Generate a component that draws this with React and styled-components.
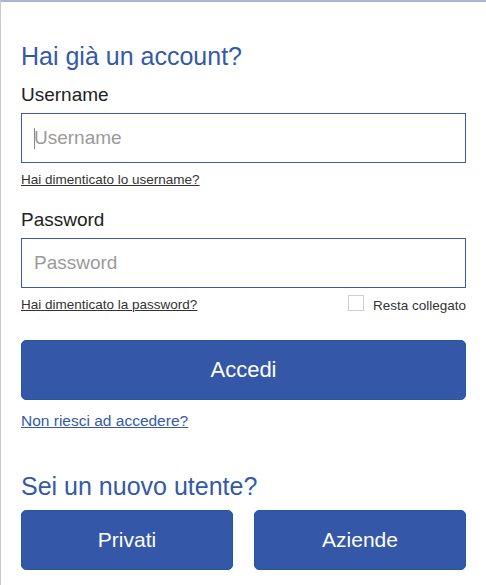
import React from 'react';
import styled, { createGlobalStyle } from 'styled-components';

const GlobalStyle = createGlobalStyle`
  html, body {
    margin: 0;
    padding: 0;
    background: #ffffff;
  }
  body {
    font-family: "Liberation Sans", Arial, Helvetica, sans-serif;
  }
  * {
    box-sizing: border-box;
  }
`;

const Page = styled.div`
  width: 486px;
  height: 585px;
  overflow: hidden;
  border-top: 2px solid #aab5d4;
  border-left: 1px solid #cbcbcb;
  padding: 39px 20px 0 20px;
  display: flex;
  flex-direction: column;
`;

const Heading = styled.h2`
  margin: ${({ $top }) => $top || 0}px 0 0 0;
  font-size: 25px;
  line-height: 30px;
  font-weight: 400;
  color: #3559a9;
`;

const Label = styled.label`
  display: block;
  margin-top: ${({ $top }) => $top}px;
  font-size: 19px;
  line-height: 22px;
  color: #222;
`;

const Field = styled.div`
  position: relative;
  margin-top: 7px;
`;

const Input = styled.input`
  display: block;
  width: 100%;
  height: 50px;
  border: 1px solid #3a5ca6;
  border-radius: 0;
  padding: 0 12px;
  font-family: inherit;
  font-size: 19px;
  color: #222;
  outline: none;
  &::placeholder {
    color: #9a9a9a;
  }
`;

const Caret = styled.span`
  position: absolute;
  left: 13px;
  top: 15px;
  width: 1px;
  height: 21px;
  background: #888;
`;

const SmallLink = styled.a`
  font-size: 13.5px;
  line-height: 16px;
  color: #333;
  text-decoration: underline;
`;

const HelpRow = styled.div`
  margin-top: 9px;
  display: flex;
  justify-content: space-between;
  align-items: center;
  height: 16px;
`;

const Remember = styled.label`
  display: flex;
  align-items: center;
  gap: 9px;
  font-size: 13.5px;
  color: #333;
`;

const Check = styled.input`
  appearance: none;
  margin: 0;
  width: 16px;
  height: 16px;
  border: 1px solid #cfcfcf;
  background: #fff;
  position: relative;
  top: -2px;
`;

const Button = styled.button`
  display: flex;
  align-items: center;
  justify-content: center;
  width: 100%;
  height: 60px;
  border: 1px solid #1f59a0;
  border-radius: 5px;
  background: #3457a8;
  color: #fff;
  font-family: inherit;
  font-size: ${({ $size }) => $size}px;
  padding: 0;
  cursor: pointer;
`;

const MainAction = styled.div`
  margin-top: 27px;
`;

const BlueLink = styled.a`
  display: block;
  margin-top: 12px;
  font-size: 15.5px;
  line-height: 18px;
  color: #3559a9;
  text-decoration: underline;
`;

const ButtonRow = styled.div`
  margin-top: 9px;
  display: grid;
  grid-template-columns: 1fr 1fr;
  gap: 21px;
`;

export default function App() {
  return (
    <>
      <GlobalStyle />
      <Page>
        <Heading>Hai già un account?</Heading>

        <Label $top={13}>Username</Label>
        <Field>
          <Input placeholder="Username" />
          <Caret />
        </Field>
        <HelpRow>
          <SmallLink href="#">Hai dimenticato lo username?</SmallLink>
        </HelpRow>

        <Label $top={21}>Password</Label>
        <Field>
          <Input type="password" placeholder="Password" />
        </Field>
        <HelpRow>
          <SmallLink href="#">Hai dimenticato la password?</SmallLink>
          <Remember>
            <Check type="checkbox" />
            Resta collegato
          </Remember>
        </HelpRow>

        <MainAction>
          <Button $size={22}>Accedi</Button>
        </MainAction>
        <BlueLink href="#">Non riesci ad accedere?</BlueLink>

        <Heading $top={41}>Sei un nuovo utente?</Heading>
        <ButtonRow>
          <Button $size={21}>Privati</Button>
          <Button $size={21}>Aziende</Button>
        </ButtonRow>
      </Page>
    </>
  );
}
